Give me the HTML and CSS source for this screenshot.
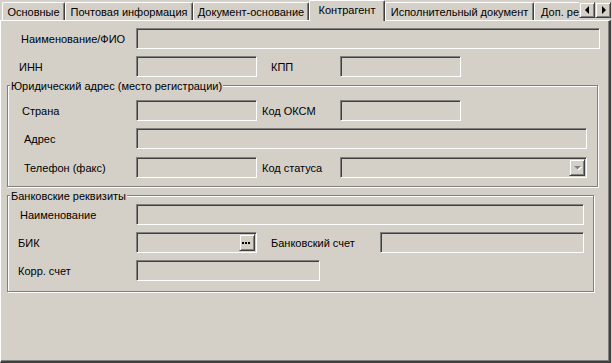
FILE: index.html
```html
<!DOCTYPE html>
<html lang="ru">
<head>
<meta charset="utf-8">
<title>Контрагент</title>
<link rel="stylesheet" href="styles.css">
</head>
<body>
<div class="window">
  <div class="tabbar">
    <div class="tabs">
      <div class="tab t1">Основные</div>
      <div class="tab t2">Почтовая информация</div>
      <div class="tab t3">Документ-основание</div>
      <div class="tab tab-active t4">Контрагент</div>
      <div class="tab t5">Исполнительный документ</div>
      <div class="tab t6">Доп. реквизиты</div>
    </div>
    <div class="scroll">
      <div class="sbtn"><svg width="14" height="14" viewBox="0 0 14 14"><polygon points="5,7 9,3 9,11" fill="#000"/></svg></div>
      <div class="sbtn"><svg width="14" height="14" viewBox="0 0 14 14"><polygon points="6,3 10,7 6,11" fill="#000"/></svg></div>
    </div>
  </div>

  <div class="page">
    <div class="row r1">
      <span class="lbl l-name">Наименование/ФИО</span>
      <span class="fld w464"></span>
    </div>
    <div class="row r2">
      <span class="lbl l-inn">ИНН</span>
      <span class="fld w121"></span>
      <span class="lbl2 l-kpp">КПП</span>
      <span class="fld w121"></span>
    </div>

    <div class="group g1">
      <span class="legend">Юридический адрес (место регистрации)</span>
      <div class="row r3">
        <span class="lbl l-country">Страна</span>
        <span class="fld w121"></span>
        <span class="lbl2 l-code">Код ОКСМ</span>
        <span class="fld w121"></span>
      </div>
      <div class="row r4">
        <span class="lbl l-addr">Адрес</span>
        <span class="fld w451"></span>
      </div>
      <div class="row r5">
        <span class="lbl l-addr">Телефон (факс)</span>
        <span class="fld w121"></span>
        <span class="lbl2 l-code">Код статуса</span>
        <span class="fld combo w247">
          <span class="btn"><svg width="14" height="15" viewBox="0 0 14 15"><polygon points="5,7 12,7 8.5,10.5" fill="#fff"/><polygon points="4,6 11,6 7.5,9.5" fill="#808080"/></svg></span>
        </span>
      </div>
    </div>

    <div class="group g2">
      <span class="legend">Банковские реквизиты</span>
      <div class="row r6">
        <span class="lbl l-bname">Наименование</span>
        <span class="fld w448"></span>
      </div>
      <div class="row r7">
        <span class="lbl l-bik">БИК</span>
        <span class="fld combo w121">
          <span class="btn"><svg width="14" height="15" viewBox="0 0 14 15"><rect x="2" y="7" width="2" height="2" fill="#000"/><rect x="5" y="7" width="2" height="2" fill="#000"/><rect x="8" y="7" width="2" height="2" fill="#000"/></svg></span>
        </span>
        <span class="lbl2 l-acc">Банковский счет</span>
        <span class="fld w204"></span>
      </div>
      <div class="row r8">
        <span class="lbl l-bik">Корр. счет</span>
        <span class="fld w184"></span>
      </div>
    </div>
  </div>
</div>
</body>
</html>
```

FILE: styles.css
```css
* { box-sizing: border-box; }

html, body {
  margin: 0;
  padding: 0;
}

body {
  width: 612px;
  height: 363px;
  overflow: hidden;
  background: #d4d0c8;
  font-family: "Liberation Sans", Arial, sans-serif;
  font-size: 11px;
  color: #000;
}

.window {
  width: 612px;
  height: 363px;
}

/* ---------- tab strip ---------- */
.tabbar {
  display: flex;
  align-items: flex-start;
  height: 20px;
}

.tabs {
  display: flex;
  align-items: flex-end;
  width: 579px;
  height: 20px;
  padding-left: 2px;
  overflow-x: clip;
  overflow-y: visible;
}

.tab {
  flex: none;
  height: 18px;
  padding-top: 2px;
  line-height: 14px;
  text-align: center;
  white-space: nowrap;
  border-top: 1px solid #fff;
  border-left: 1px solid #fff;
  border-right: 1px solid #404040;
  border-top-left-radius: 2px;
  border-top-right-radius: 2px;
  box-shadow: inset -1px 0 0 #808080;
  background: #d4d0c8;
}

.t1 { width: 63px; }
.t2 { width: 128px; }
.t3 { width: 116px; }
.t4 { width: 76px; }
.t5 { width: 149px; }
.t6 { width: 90px; text-align: left; padding-left: 6px; }

.tab-active {
  position: relative;
  z-index: 1;
  height: 21px;
  margin-bottom: -1px;
  padding-top: 2px;
  padding-bottom: 4px;
}

.scroll {
  display: flex;
  margin-top: 2px;
}

.sbtn {
  width: 16px;
  height: 16px;
  display: flex;
  align-items: center;
  justify-content: center;
  border-style: solid;
  border-width: 1px;
  border-color: #d4d0c8 #404040 #404040 #d4d0c8;
  box-shadow: inset 1px 1px 0 #fff, inset -1px -1px 0 #808080;
}

/* ---------- tab page ---------- */
.page {
  width: 611px;
  height: 343px;
  border-top: 1px solid #fff;
  border-left: 1px solid #fff;
  border-right: 2px solid #404040;
  border-bottom: 2px solid #404040;
  box-shadow: inset -1px -1px 0 #808080;
}

.row {
  display: flex;
  align-items: center;
  height: 21px;
}

.lbl, .lbl2 {
  flex: none;
  line-height: 21px;
  white-space: nowrap;
  padding-top: 1px;
}

.r1 { margin-top: 7px; padding-left: 20px; }
.r2 { margin-top: 7px; padding-left: 18px; }
.l-name { width: 115px; }
.l-inn { width: 117px; }

.r3 { padding-left: 14px; }
.r4 { margin-top: 7px; padding-left: 16px; }
.r5 { margin-top: 8px; padding-left: 16px; }
.l-country { width: 114px; }
.l-addr { width: 112px; }

.r6 { padding-left: 12px; }
.r7 { margin-top: 7px; padding-left: 10px; }
.r8 { margin-top: 7px; padding-left: 10px; }
.l-bname { width: 116px; }
.l-bik { width: 118px; }

.l-kpp { margin-left: 14px; width: 69px; }
.l-code { margin-left: 5px; width: 78px; }
.l-acc { margin-left: 14px; width: 109px; }

/* sunken edit field */
.fld {
  flex: none;
  display: block;
  height: 21px;
  border-style: solid;
  border-width: 1px;
  border-color: #808080 #fff #fff #808080;
  box-shadow: inset 1px 1px 0 #404040;
  background: #d4d0c8;
}

.w464 { width: 464px; }
.w121 { width: 121px; }
.w451 { width: 451px; }
.w247 { width: 247px; }
.w448 { width: 448px; }
.w204 { width: 204px; }
.w184 { width: 184px; }

.combo {
  display: flex;
  justify-content: flex-end;
  padding: 1px;
}

.btn {
  width: 16px;
  height: 17px;
  display: flex;
  align-items: center;
  justify-content: center;
  border-style: solid;
  border-width: 1px;
  border-color: #d4d0c8 #404040 #404040 #d4d0c8;
  box-shadow: inset 1px 1px 0 #fff, inset -1px -1px 0 #808080;
}

/* ---------- group boxes ---------- */
.group {
  position: relative;
  margin-left: 6px;
  border: 1px solid #808080;
  box-shadow: inset 1px 1px 0 #fff, 1px 1px 0 #fff;
}

.g1 {
  width: 591px;
  margin-top: 8px;
  padding-top: 14px;
  padding-bottom: 8px;
}

.g2 {
  width: 587px;
  margin-top: 8px;
  padding-top: 8px;
  padding-bottom: 10px;
}

.legend {
  position: absolute;
  top: -6px;
  left: 2px;
  padding: 0 1px;
  line-height: 13px;
  background: #d4d0c8;
  white-space: nowrap;
}
```
